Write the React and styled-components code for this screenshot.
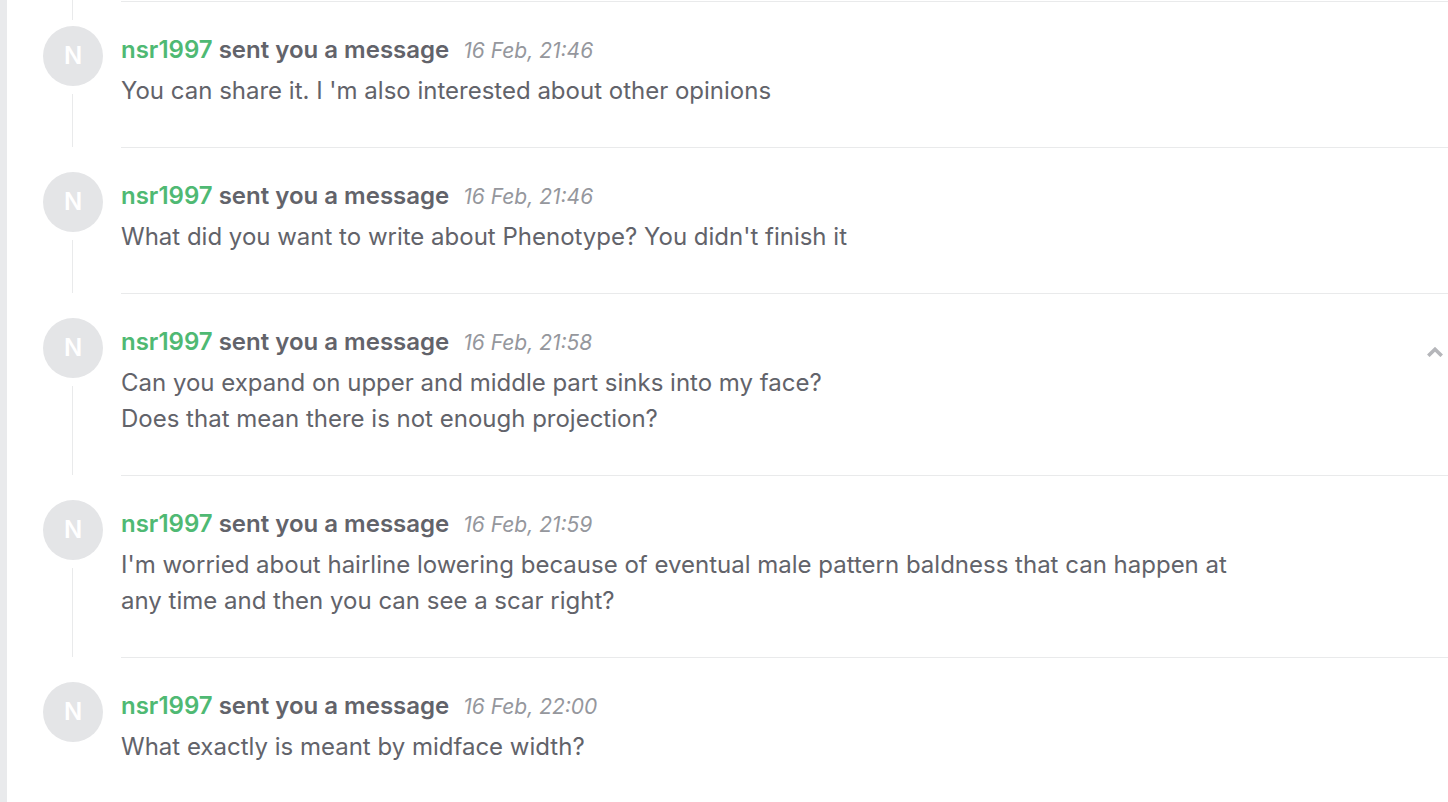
import React from 'react';
import styled, { createGlobalStyle } from 'styled-components';

const messages = [
  { id: 1, date: '16 Feb, 21:46', text: "You can share it. I 'm also interested about other opinions" },
  { id: 2, date: '16 Feb, 21:46', text: "What did you want to write about Phenotype? You didn't finish it" },
  {
    id: 3,
    date: '16 Feb, 21:58',
    text: 'Can you expand on upper and middle part sinks into my face?\nDoes that mean there is not enough projection?',
    collapsible: true,
  },
  {
    id: 4,
    date: '16 Feb, 21:59',
    text: "I'm worried about hairline lowering because of eventual male pattern baldness that can happen at any time and then you can see a scar right?",
  },
  { id: 5, date: '16 Feb, 22:00', text: 'What exactly is meant by midface width?' },
];

const Message = ({ message, first, last }) => (
  <Item>
    <Rail $first={first}>
      {first && <Stub />}
      <Avatar>N</Avatar>
      {!last && <Line />}
    </Rail>
    <Content $first={first}>
      <Body>
        <Header>
          <Title>
            <UserLink href="#nsr1997">nsr1997</UserLink> sent you a message
          </Title>
          <Time>{message.date}</Time>
        </Header>
        <Text>{message.text}</Text>
      </Body>
      {message.collapsible && (
        <Toggle type="button" aria-label="Collapse message">
          <svg width="16" height="10" viewBox="0 0 16 10" fill="none" stroke="#b5b6ba" strokeWidth="3.6">
            <path d="M1.3 8.8 8 2.300l6.700 6.500" />
          </svg>
        </Toggle>
      )}
    </Content>
  </Item>
);

const App = () => (
  <>
    <GlobalStyle />
    <Page>
      <List>
        {messages.map((message, i) => (
          <Message
            key={message.id}
            message={message}
            first={i === 0}
            last={i === messages.length - 1}
          />
        ))}
      </List>
    </Page>
  </>
);

const GlobalStyle = createGlobalStyle`
  * {
    box-sizing: border-box;
  }

  body {
    margin: 0;
    background-color: #ffffff;
    color: #62636a;
    font-family: 'Inter', sans-serif;
  }
`;

const Page = styled.main`
  min-height: 100vh;
  padding-left: 36px;
  border-left: 7px solid #e9eaec;
`;

const List = styled.ul`
  margin: 0;
  padding: 0;
  list-style: none;
`;

const Item = styled.li`
  display: flex;
  gap: 18px;
`;

const Rail = styled.div`
  display: flex;
  flex-direction: column;
  flex: none;
  width: 60px;
  padding-top: ${({ $first }) => ($first ? '0' : '25px')};
`;

const Avatar = styled.div`
  display: flex;
  align-items: center;
  justify-content: center;
  flex: none;
  width: 60px;
  height: 60px;
  padding-bottom: 2px;
  border-radius: 50%;
  background-color: #e4e5e7;
  color: #ffffff;
  font-size: 24px;
  font-weight: 600;
`;

const Stub = styled.div`
  width: 1px;
  height: 20px;
  margin: 0 0 6px 29px;
  background-color: #e9eaeb;
`;

const Line = styled.div`
  flex: 1;
  width: 1px;
  margin: 8px 0 0 29px;
  background-color: #e9eaeb;
`;

const Content = styled.div`
  display: flex;
  flex: 1;
  justify-content: space-between;
  margin-top: ${({ $first }) => ($first ? '1px' : '0')};
  padding: 30px 5px 38px 0;
  border-top: 1px solid #e9eaeb;
`;

const Body = styled.div`
  max-width: 1136px;
`;

const Header = styled.div`
  display: flex;
  align-items: baseline;
  gap: 14px;
  height: 41px;
`;

const Title = styled.h2`
  margin: 0;
  font-size: 24px;
  line-height: 36px;
  font-weight: 600;
`;

const UserLink = styled.a`
  color: #4fb973;
  text-decoration: none;
`;

const Time = styled.time`
  color: #95979d;
  font-size: 21px;
  font-style: italic;
  line-height: 36px;
`;

const Text = styled.p`
  margin: 0;
  font-size: 24px;
  line-height: 36px;
  white-space: pre-line;
`;

const Toggle = styled.button`
  align-self: flex-start;
  display: flex;
  margin-top: 23px;
  padding: 0;
  border: none;
  background: none;
  cursor: pointer;
`;

export default App;
